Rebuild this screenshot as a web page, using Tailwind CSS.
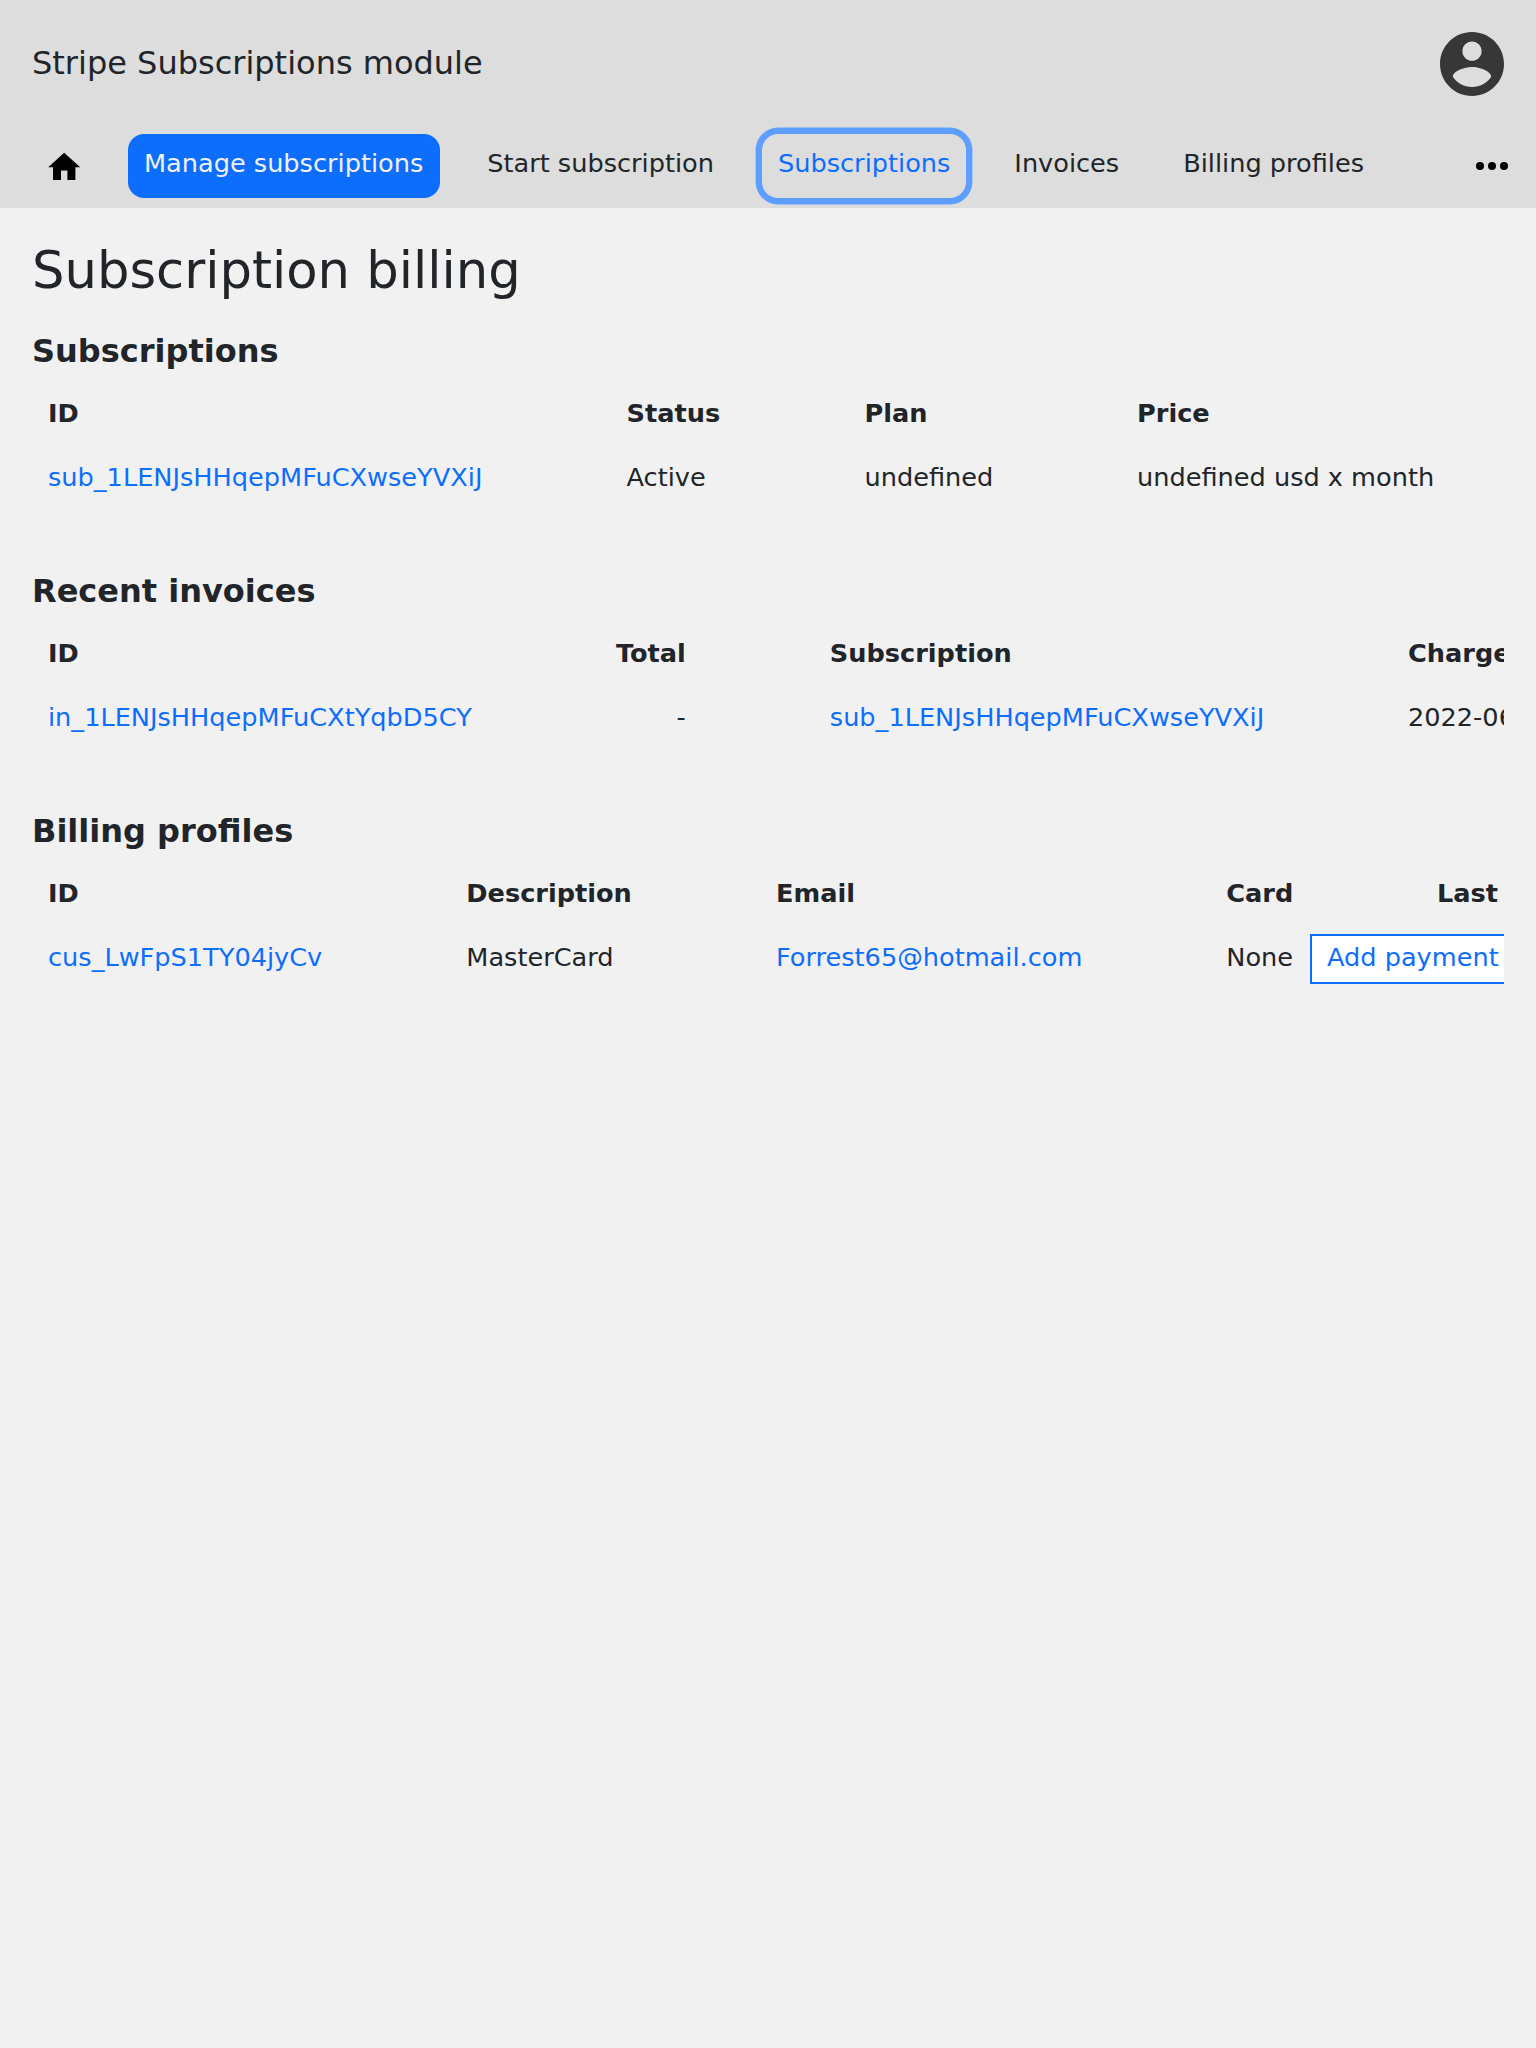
<!DOCTYPE html>
<html lang="en">
<head>
<meta charset="utf-8">
<title>Subscription billing</title>
<script src="https://cdn.jsdelivr.net/npm/@tailwindcss/browser@4"></script>
</head>
<body class="min-h-screen overflow-x-hidden bg-[#f1f1f1] font-['DejaVu_Sans',sans-serif] text-[25.6px] leading-8 text-[#212529]">
<header class="h-52 bg-[#ddd]">
  <div class="flex h-32 items-center justify-between px-8">
    <div class="pb-0.5 text-[32px] leading-10">Stripe Subscriptions module</div>
    <svg class="-mr-[6.4px] size-[76.8px]" viewBox="0 0 24 24" fill="#373737"><path transform="translate(-0.12 -0.12)" d="M12 2C6.48 2 2 6.48 2 12s4.48 10 10 10 10-4.48 10-10S17.52 2 12 2zm0 3c1.66 0 3 1.34 3 3s-1.340 3-3 3-3-1.340-3-3 1.340-3 3-3zm0 14.200c-2.500 0-4.710-1.280-6-3.220.030-1.990 4-3.080 6-3.080 1.990 0 5.970 1.090 6 3.080-1.290 1.940-3.500 3.220-6 3.220z"/></svg>
  </div>
  <nav class="flex items-start gap-8 pt-1.5 pr-5 pl-8 whitespace-nowrap">
    <a class="flex h-16 w-16 items-center justify-center pt-0.5"><svg class="size-[38.4px]" viewBox="0 0 24 24"><path d="M10 20v-6h4v6h5v-8h3L12 3 2 12h3v8z"/></svg></a>
    <a class="-mr-[0.8px] h-16 w-[312px] rounded-2xl bg-[#0d6efd] px-4 pt-[13px] text-[#f1f1f1]">Manage subscriptions</a>
    <a class="h-16 px-4 pt-[13px]">Start subscription</a>
    <a class="h-16 rounded-2xl px-4 pt-[13px] text-[#0d6efd] shadow-[0_0_0_6.4px_#5e9eff]">Subscriptions</a>
    <a class="h-16 px-4 pt-[13px]">Invoices</a>
    <a class="h-16 px-4 pt-[13px]">Billing profiles</a>
    <a class="ml-auto flex h-16 items-center"><svg class="size-12" viewBox="0 0 24 24"><circle cx="6" cy="12" r="2"/><circle cx="12" cy="12" r="2"/><circle cx="18" cy="12" r="2"/></svg></a>
  </nav>
</header>
<main class="px-8 pt-8">
  <h1 class="mb-[31px] text-[51.2px] leading-[61px]">Subscription billing</h1>

  <section class="mb-[63px] overflow-hidden">
    <h2 class="mb-[11px] text-[32px] leading-[38px] font-bold">Subscriptions</h2>
    <table class="w-[1472px] table-fixed text-left whitespace-nowrap">
      <colgroup><col class="w-[578.5px]"><col class="w-[238px]"><col class="w-[272.5px]"><col></colgroup>
      <tr class="h-16"><th class="px-4">ID</th><th class="px-4">Status</th><th class="px-4">Plan</th><th class="px-4">Price</th></tr>
      <tr class="h-16"><td class="px-4 text-[#0d6efd]">sub_1LENJsHHqepMFuCXwseYVXiJ</td><td class="px-4">Active</td><td class="px-4">undefined</td><td class="px-4">undefined usd x month</td></tr>
    </table>
  </section>

  <section class="mb-[63px] overflow-hidden">
    <h2 class="mb-[11px] text-[32px] leading-[38px] font-bold">Recent invoices</h2>
    <table class="w-[1700px] table-fixed text-left whitespace-nowrap">
      <colgroup><col class="w-[552px]"><col class="w-[229.8px]"><col class="w-[578.2px]"><col></colgroup>
      <tr class="h-16"><th class="px-4">ID</th><th class="pr-[128px] text-right">Total</th><th class="px-4">Subscription</th><th class="px-4">Charged</th></tr>
      <tr class="h-16"><td class="px-4 text-[#0d6efd]">in_1LENJsHHqepMFuCXtYqbD5CY</td><td class="pr-[128px] text-right">-</td><td class="px-4 text-[#0d6efd]">sub_1LENJsHHqepMFuCXwseYVXiJ</td><td class="px-4">2022-06</td></tr>
    </table>
  </section>

  <section class="overflow-hidden">
    <h2 class="mb-[11px] text-[32px] leading-[38px] font-bold">Billing profiles</h2>
    <table class="w-[1700px] table-fixed text-left whitespace-nowrap">
      <colgroup><col class="w-[418.3px]"><col class="w-[309.7px]"><col class="w-[450.3px]"><col class="w-[99.7px]"><col></colgroup>
      <tr class="h-16"><th class="px-4">ID</th><th class="px-4">Description</th><th class="px-4">Email</th><th class="px-4">Card</th><th class="pl-[127px]">Last</th></tr>
      <tr class="h-16"><td class="px-4 text-[#0d6efd]">cus_LwFpS1TY04jyCv</td><td class="px-4">MasterCard</td><td class="px-4 text-[#0d6efd]">Forrest65@hotmail.com</td><td class="px-4">None</td><td class="pt-1"><a class="block h-[50px] border-2 border-[#0d6efd] bg-white px-[15px] pt-[5px] text-[#0d6efd]">Add payment</a></td></tr>
    </table>
  </section>
</main>
</body>
</html>
